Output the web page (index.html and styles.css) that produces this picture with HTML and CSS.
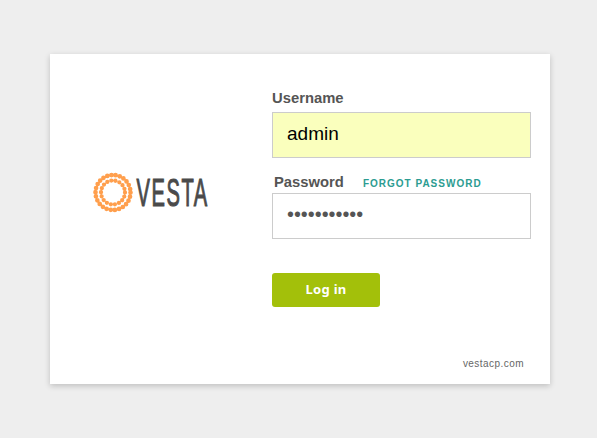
FILE: index.html
```html
<!DOCTYPE html>
<html lang="en">
<head>
<meta charset="utf-8">
<title>Vesta</title>
<link rel="stylesheet" href="styles.css">
</head>
<body>
<main class="card">
  <div class="brand">
    <svg class="logo" width="124" height="44" viewBox="0 0 124 44" aria-label="Vesta">
      <circle class="ring outer" cx="22" cy="22.5" r="17.5"/>
      <circle class="ring inner" cx="22" cy="22.5" r="12"/>
      <text class="wordmark" transform="translate(45.5 35.5) scale(0.53 1)">VESTA</text>
    </svg>
  </div>
  <form class="form">
    <label class="label" for="user">Username</label>
    <input class="field filled" id="user" type="text" value="admin">
    <div class="pass-row">
      <label class="label" for="pass">Password</label>
      <a class="forgot" href="#">FORGOT PASSWORD</a>
    </div>
    <input class="field secret" id="pass" type="password" value="12345678901">
    <button class="submit" type="button">Log in</button>
    <a class="site" href="#">vestacp.com</a>
  </form>
</main>
</body>
</html>
```
FILE: styles.css
```css
html, body { margin: 0; padding: 0; }
body {
  background: #eeeeee;
  font-family: "Liberation Sans", Arial, sans-serif;
  height: 438px;
  overflow: hidden;
}
.card {
  box-sizing: border-box;
  width: 500px;
  height: 330px;
  margin: 54px 0 0 50px;
  background: #ffffff;
  box-shadow: 0 2px 6px rgba(0, 0, 0, 0.2);
  display: flex;
}
.brand {
  width: 222px;
  flex: none;
  padding: 116px 0 0 41px;
  box-sizing: border-box;
}
.logo { display: block; }
.ring { fill: none; stroke: #ff9f4d; stroke-linecap: round; }
.outer { stroke-width: 4.7; stroke-dasharray: 0 4.229; }
.inner { stroke-width: 4.3; stroke-dasharray: 0 4.189; }
.wordmark {
  font-family: "Liberation Sans", sans-serif;
  font-size: 38px;
  letter-spacing: 2.9px;
  fill: #4a4a4a;
  stroke: #4a4a4a;
  stroke-width: 1.1px;
}
.form { flex: 1; display: flex; flex-direction: column; align-items: flex-start; padding-top: 35px; }
.label { font-size: 14.8px; font-weight: bold; color: #555555; line-height: 18px; display: block; }
.field {
  box-sizing: border-box;
  width: 259px;
  height: 46px;
  margin-top: 5px;
  padding: 0 14px 2px;
  border: 1px solid #cccccc;
  outline: none;
  font-family: "Liberation Sans", Arial, sans-serif;
  font-size: 19px;
  color: #000000;
  background: #ffffff;
}
.filled { background: #faffbd; }
.secret { color: #555555; margin-top: 2px; font-size: 19.8px; padding-bottom: 4px; }
.pass-row { display: flex; align-items: baseline; margin-top: 15px; padding-left: 2px; }
.forgot {
  margin-left: 19px;
  font-size: 10px;
  font-weight: bold;
  letter-spacing: 1px;
  color: #2c9c91;
  text-decoration: none;
}
.submit {
  width: 108px;
  height: 34px;
  margin-top: 34px;
  padding: 0 0 2px;
  border: 0;
  border-radius: 3px;
  background: #a3c00a;
  color: #ffffff;
  font-family: "Noto Sans", sans-serif;
  font-weight: bold;
  font-size: 13px;
  letter-spacing: 0.3px;
}
.site {
  align-self: flex-end;
  margin: 51px 26px 0 0;
  font-family: "Liberation Sans", sans-serif;
  font-size: 10px;
  letter-spacing: 0.45px;
  color: #666666;
  text-decoration: none;
}
```
